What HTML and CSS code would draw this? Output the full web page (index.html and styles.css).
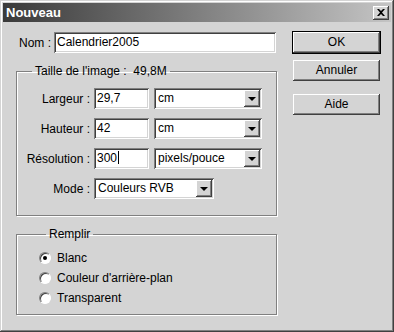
FILE: index.html
```html
<!DOCTYPE html>
<html lang="fr">
<head>
  <meta charset="UTF-8">
  <title>Nouveau</title>
  <link rel="stylesheet" href="styles.css">
</head>
<body>

<div class="window">
  <!-- Title bar -->
  <div class="titlebar">
    <span class="title">Nouveau</span>
    <span class="close">
      <svg width="8" height="7" viewBox="0 0 8 7"><path d="M0 0h2l2 2 2-2h2L5 3.5 8 7H6L4 5 2 7H0l3-3.5z" fill="#000"/></svg>
    </span>
  </div>

  <div class="content">
    <div class="main">
      <!-- Name -->
      <div class="name-row">
        <span class="name-label">Nom :</span>
        <div class="field name-field">Calendrier2005</div>
      </div>

      <!-- Image size -->
      <fieldset class="group size-group">
        <legend>Taille de l'image :&nbsp; 49,8M</legend>
        <div class="row">
          <span class="label">Largeur :</span>
          <div class="field num">29,7</div>
          <div class="select unit"><span class="value">cm</span><span class="arrow"></span></div>
        </div>
        <div class="row">
          <span class="label">Hauteur :</span>
          <div class="field num">42</div>
          <div class="select unit"><span class="value">cm</span><span class="arrow"></span></div>
        </div>
        <div class="row">
          <span class="label">Résolution :</span>
          <div class="field num">300<span class="caret"></span></div>
          <div class="select unit"><span class="value">pixels/pouce</span><span class="arrow"></span></div>
        </div>
        <div class="row">
          <span class="label">Mode :</span>
          <div class="select mode"><span class="value">Couleurs RVB</span><span class="arrow"></span></div>
        </div>
      </fieldset>

      <!-- Fill -->
      <fieldset class="group fill-group">
        <legend>Remplir</legend>
        <div class="radio-row"><span class="radio checked"></span>Blanc</div>
        <div class="radio-row"><span class="radio"></span>Couleur d'arrière-plan</div>
        <div class="radio-row"><span class="radio"></span>Transparent</div>
      </fieldset>
    </div>

    <!-- Buttons -->
    <div class="buttons">
      <div class="btn default">OK</div>
      <div class="btn">Annuler</div>
      <div class="btn spaced">Aide</div>
    </div>
  </div>
</div>

</body>
</html>
```

FILE: styles.css
```css
body {
  margin: 0;
  font-family: "Liberation Sans", Arial, sans-serif;
  font-size: 12px;
  color: #000;
  background: #d4d4d4;
}
.window {
  width: 394px;
  height: 332px;
  box-sizing: border-box;
  padding: 3px;
  background: #d4d4d4;
  box-shadow: inset -1px -1px #404040, inset 1px 1px #d4d4d4,
              inset -2px -2px #808080, inset 2px 2px #fff;
}
.titlebar {
  height: 19px;
  display: flex;
  align-items: center;
  justify-content: space-between;
  padding: 0 2px 0 3px;
  background: linear-gradient(to right, #3a3a3a, #c4c4c4);
}
.title {
  color: #fff;
  font-weight: bold;
  font-size: 13px;
}
.close {
  width: 16px;
  height: 14px;
  display: flex;
  align-items: center;
  justify-content: center;
  background: #d4d4d4;
  box-shadow: inset -1px -1px #404040, inset 1px 1px #fff,
              inset -2px -2px #808080;
}
.content {
  display: flex;
  padding: 10px 0 0 13px;
}
.main {
  width: 261px;
}
.name-row {
  display: flex;
  align-items: center;
}
.name-label {
  width: 35px;
  padding-right: 3px;
  text-align: right;
}
.field {
  height: 21px;
  box-sizing: border-box;
  padding: 0 3px;
  line-height: 21px;
  background: #fff;
  box-shadow: inset 1px 1px #808080, inset -1px -1px #fff,
              inset 2px 2px #404040, inset -2px -2px #d4d4d4;
  white-space: nowrap;
}
.name-field {
  width: 222px;
}
.group {
  margin: 0;
  border: 1px solid #808080;
  box-shadow: inset 1px 1px #fff, 1px 1px #fff;
}
.group legend {
  padding: 0 3px;
  margin-left: 7px;
  line-height: 14px;
}
.size-group {
  margin-top: 11px;
  padding: 10px 0 16px 8px;
}
.row {
  display: flex;
  align-items: center;
  margin-bottom: 9px;
}
.row:last-child {
  margin-bottom: 0;
}
.label {
  width: 65px;
  padding-right: 4px;
  text-align: right;
  white-space: nowrap;
}
.num {
  width: 55px;
  margin-right: 5px;
}
.caret {
  display: inline-block;
  width: 1px;
  height: 13px;
  background: #000;
  vertical-align: -2px;
  margin-left: 1px;
}
.select {
  height: 21px;
  box-sizing: border-box;
  display: flex;
  justify-content: space-between;
  padding: 2px;
  background: #fff;
  box-shadow: inset 1px 1px #808080, inset -1px -1px #fff,
              inset 2px 2px #404040, inset -2px -2px #d4d4d4;
}
.select .value {
  line-height: 17px;
  padding-left: 2px;
}
.unit {
  width: 108px;
}
.mode {
  width: 120px;
}
.arrow {
  width: 16px;
  height: 17px;
  position: relative;
  background: #d4d4d4;
  box-shadow: inset -1px -1px #404040, inset 1px 1px #fff,
              inset -2px -2px #808080;
}
.arrow::after {
  content: "";
  position: absolute;
  left: 4px;
  top: 7px;
  border-left: 4px solid transparent;
  border-right: 4px solid transparent;
  border-top: 4px solid #000;
}
.fill-group {
  margin-top: 11px;
  padding: 7px 0 6px 22px;
}
.radio-row {
  display: flex;
  align-items: center;
  height: 20px;
}
.radio {
  width: 12px;
  height: 12px;
  box-sizing: border-box;
  margin-right: 6px;
  border-radius: 50%;
  background: #fff;
  border: 1px solid;
  border-color: #808080 #fff #fff #808080;
  box-shadow: inset 1px 1px #404040;
  position: relative;
}
.radio.checked::after {
  content: "";
  position: absolute;
  left: 3px;
  top: 3px;
  width: 4px;
  height: 4px;
  border-radius: 50%;
  background: #000;
}
.buttons {
  margin-left: 16px;
  display: flex;
  flex-direction: column;
  gap: 7px;
}
.btn {
  width: 87px;
  height: 21px;
  box-sizing: border-box;
  text-align: center;
  line-height: 21px;
  background: #d4d4d4;
  box-shadow: inset -1px -1px #404040, inset 1px 1px #fff,
              inset -2px -2px #808080;
}
.btn.default {
  box-shadow: 0 0 0 1px #000, inset -1px -1px #404040, inset 1px 1px #fff,
              inset -2px -2px #808080;
}
.btn.spaced {
  margin-top: 6px;
}
```
